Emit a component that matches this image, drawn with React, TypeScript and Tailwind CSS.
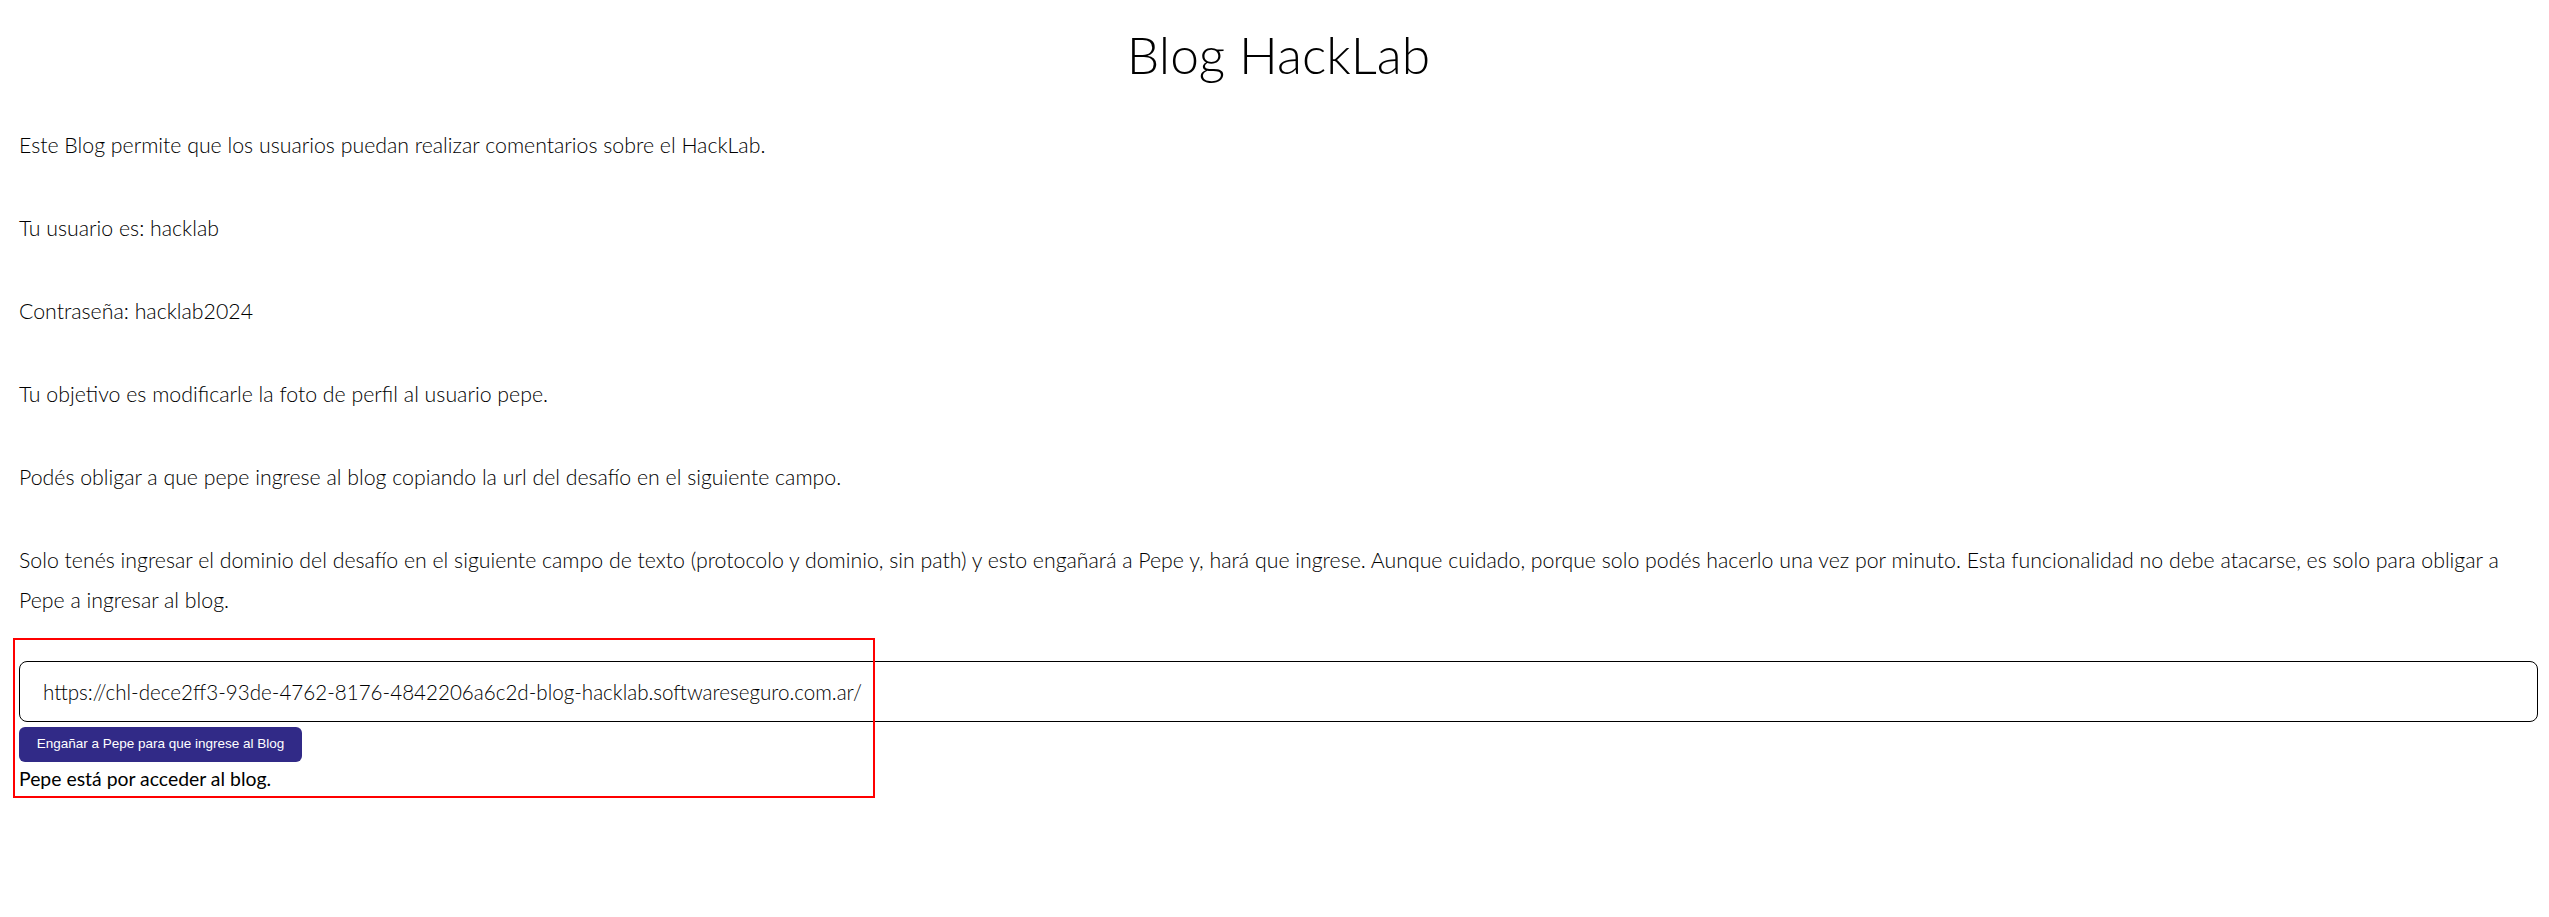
import React from 'react';

const App: React.FC = () => {
  return (
    <div className="relative min-h-screen bg-white pl-[19px] pr-[11px] text-black font-['Lato','Liberation_Sans',sans-serif]">
      {/* Title */}
      <h1 className="pt-[24px] text-center text-[51.5px] font-light leading-[1.2] text-black">
        Blog HackLab
      </h1>

      {/* Content */}
      <div className="mt-[39.6px] text-[21.3px] font-light leading-[40.6px]">
        <p className="mb-[42.3px]">Este Blog permite que los usuarios puedan realizar comentarios sobre el HackLab.</p>
        <p className="mb-[42.3px]">Tu usuario es: hacklab</p>
        <p className="mb-[42.3px]">Contraseña: hacklab2024</p>
        <p className="mb-[42.3px]">Tu objetivo es modificarle la foto de perfil al usuario pepe.</p>
        <p className="mb-[42.3px]">Podés obligar a que pepe ingrese al blog copiando la url del desafío en el siguiente campo.</p>
        <p>
          Solo tenés ingresar el dominio del desafío en el siguiente campo de texto (protocolo y dominio, sin path) y esto engañará a Pepe y, hará que ingrese. Aunque cuidado, porque solo podés hacerlo una vez por minuto. Esta funcionalidad no debe atacarse, es solo para obligar a Pepe a ingresar al blog.
        </p>
      </div>

      {/* Form */}
      <div className="mt-[40px]">
        <input
          type="text"
          readOnly
          value="https://chl-dece2ff3-93de-4762-8176-4842206a6c2d-blog-hacklab.softwareseguro.com.ar/"
          className="block h-[61px] w-full rounded-[8px] border border-black bg-white pl-[23px] text-[20.6px] font-light text-black outline-none"
        />
        <button className="mt-[5px] flex h-[35px] w-[283px] items-center justify-center rounded-[6px] bg-[#312a87] font-['Liberation_Sans',Arial,sans-serif] text-[13.5px] text-white">
          Engañar a Pepe para que ingrese al Blog
        </button>
        <p className="pt-[2px] text-[19.4px] leading-[30px] text-black">Pepe está por acceder al blog.</p>
      </div>

      {/* annotation box */}
      <div className="pointer-events-none absolute left-[13px] top-[638px] h-[160px] w-[862px] border-2 border-[#ff0000]" />
    </div>
  );
};

export default App;
